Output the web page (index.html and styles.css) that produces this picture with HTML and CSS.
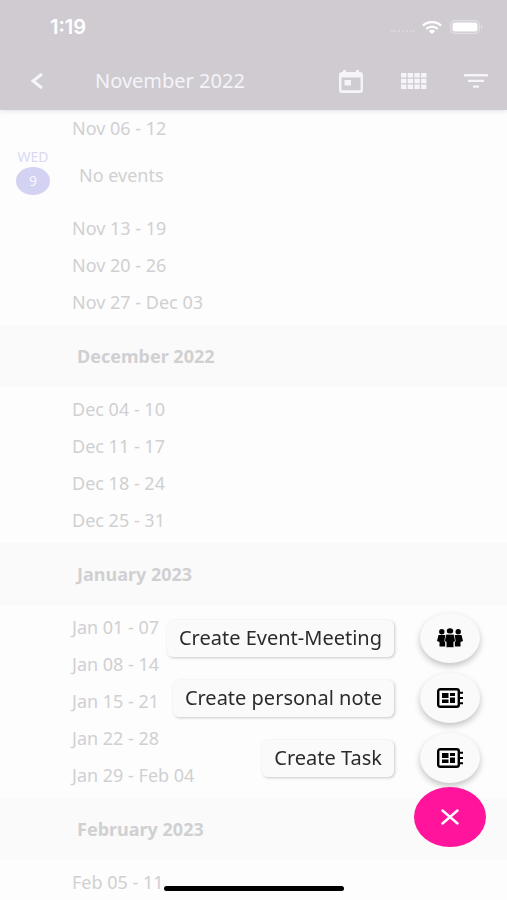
FILE: index.html
```
<!DOCTYPE html>
<html lang="en">
<head>
<meta charset="utf-8">
<meta name="viewport" content="width=device-width, initial-scale=1">
<title>Calendar</title>
<link rel="stylesheet" href="styles.css">
</head>
<body>
<header class="top">
  <div class="status">
    <span class="clock">1:19</span>
    <span class="signal"></span>
    <svg class="wifi" viewBox="0 0 20 13" preserveAspectRatio="none" fill="none" stroke="currentColor" stroke-width="2.4"><path d="M1 4.5C6-.1 14-.1 19 4.500M4.300 7.900c3.300-3 8.100-3 11.400 0"/><path d="M10 13 6.800 10c1.900-1.700 4.500-1.700 6.400 0z" fill="currentColor" stroke="none"/></svg>
    <svg class="battery" viewBox="0 0 33 14"><rect x=".7" y=".7" width="28.600" height="12.600" rx="4" fill="none" stroke="#e3e0e5" stroke-width="1.200"/><rect x="2.500" y="2.500" width="25" height="9" rx="2.500" fill="currentColor"/><path d="M31 5c2 .6 2 3.400 0 4z" fill="#e3e0e5"/></svg>
  </div>
  <nav class="bar">
    <button class="tool" aria-label="Back"><svg width="14" height="18" viewBox="0 0 14 18" fill="none" stroke="currentColor" stroke-width="3"><path d="M12 2 3 9l9 7"/></svg></button>
    <h1 class="title">November 2022</h1>
    <button class="tool" aria-label="Today"><svg width="24" height="23" viewBox="0 0 24 23"><path fill="currentColor" fill-rule="evenodd" d="M4 0h3v2h10V0h3v2h1a3 3 0 0 1 3 3v15a3 3 0 0 1-3 3H3a3 3 0 0 1-3-3V5a3 3 0 0 1 3-3h1zM2.500 7.500v12.700h19V7.500zM5.500 10h6.500v5.500H5.500z"/></svg></button>
    <button class="tool" aria-label="Month grid"><svg width="26" height="16" viewBox="0 0 26 16" fill="currentColor"><path d="M0 0h5.400v4.500H0zM6.700 0h5.400v4.500H6.700zM13.400 0h5.400v4.500h-5.400zM20.100 0h5.400v4.500h-5.400zM0 5.700h5.400v4.500H0zM6.700 5.700h5.400v4.500H6.700zM13.400 5.700h5.400v4.500h-5.400zM20.100 5.700h5.400v4.500h-5.400zM0 11.400h5.400v4.500H0zM6.700 11.400h5.400v4.500H6.700zM13.400 11.400h5.400v4.500h-5.400zM20.100 11.400h5.400v4.500h-5.400z"/></svg></button>
    <button class="tool" aria-label="Filter"><svg width="24" height="14" viewBox="0 0 24 14" fill="currentColor"><path d="M0 0h24v2.400H0zM4 5.700h16v2.400H4zM9 11.400h6v2.400H9z"/></svg></button>
  </nav>
</header>
<main class="agenda">
  <section class="weeks first">
    <p class="week">Nov 06 - 12</p>
    <div class="day">
      <div class="date"><span>WED</span><span class="number">9</span></div>
      <p class="event">No events</p>
    </div>
    <p class="week">Nov 13 - 19</p>
    <p class="week">Nov 20 - 26</p>
    <p class="week">Nov 27 - Dec 03</p>
  </section>
  <h2 class="month">December 2022</h2>
  <section class="weeks">
    <p class="week">Dec 04 - 10</p>
    <p class="week">Dec 11 - 17</p>
    <p class="week">Dec 18 - 24</p>
    <p class="week">Dec 25 - 31</p>
  </section>
  <h2 class="month">January 2023</h2>
  <section class="weeks">
    <p class="week">Jan 01 - 07</p>
    <p class="week">Jan 08 - 14</p>
    <p class="week">Jan 15 - 21</p>
    <p class="week">Jan 22 - 28</p>
    <p class="week">Jan 29 - Feb 04</p>
  </section>
  <h2 class="month">February 2023</h2>
  <section class="weeks">
    <p class="week">Feb 05 - 11</p>
  </section>
</main>
<div class="actions">
  <button class="action"><span class="label">Create Event-Meeting</span><span class="bubble">
    <svg width="26" height="20" viewBox="0 0 26 20"><circle cx="4.800" cy="3.700" r="2.700"/><circle cx="21.200" cy="3.700" r="2.700"/><path d="M1.500 7h6.700v11.500H2.500V14L0 13zM17.800 7h6.700L26 13l-2.500 1v4.500h-5.700z"/><ellipse cx="13" cy="2.900" rx="3.200" ry="2.700"/><path d="M9 6.300h8l1.500 7-1.700.7v5.500H9.200V14l-1.700-.7z" stroke="#fafafa" stroke-width=".6"/></svg>
  </span></button>
  <button class="action"><span class="label">Create personal note</span><span class="bubble">
    <svg width="26" height="20" viewBox="0 0 26 20"><rect x="1.200" y="1.200" width="20.600" height="17.600" rx="2" fill="none" stroke="#000" stroke-width="2.400"/><path d="M5 5h6.500v5H5zM13 5h5v3h-5zM5 11.500h6.500V15H5zM13 9.500h5V15h-5zM23 3.800h3v2h-3zM23 9h3v2h-3zM23 14.200h3v2h-3z"/></svg>
  </span></button>
  <button class="action"><span class="label">Create Task</span><span class="bubble">
    <svg width="26" height="20" viewBox="0 0 26 20"><rect x="1.200" y="1.200" width="20.600" height="17.600" rx="2" fill="none" stroke="#000" stroke-width="2.400"/><path d="M5 5h6.500v5H5zM13 5h5v3h-5zM5 11.500h6.500V15H5zM13 9.500h5V15h-5zM23 3.800h3v2h-3zM23 9h3v2h-3zM23 14.200h3v2h-3z"/></svg>
  </span></button>
  <button class="close" aria-label="Close menu"><svg width="18" height="16" viewBox="0 0 18 16" stroke="#fff" stroke-width="2.400" stroke-linecap="round"><path d="m1.500 1.500 15 13m0-13-15 13"/></svg></button>
</div>
<div class="home"></div>
</body>
</html>
```
FILE: styles.css
```
* {
  box-sizing: border-box;
}

body {
  margin: 0;
  height: 100vh;
  overflow: hidden;
  background: #fdfdfd;
  color: #d0d0d2;
  font: 18px/24px "Noto Sans", sans-serif;
}

h1, h2, p {
  margin: 0;
}

button {
  border: 0;
  padding: 0;
  background: none;
  color: inherit;
  font: inherit;
}

svg {
  display: block;
}

.top {
  position: relative;
  background: #cfcbd1;
  color: #f5f4f8;
  box-shadow: 0 1px 5px #e2e0e6;
}

.status {
  display: flex;
  align-items: center;
  height: 54px;
  padding: 0 24px 0 50px;
  color: #fff;
}

.clock {
  margin-right: auto;
  font: 600 20px/26px Inter, sans-serif;
}

.signal {
  width: 24px;
  margin: 8px 7px 0 0;
  border-top: 2px dotted #dad7dc;
}

.wifi {
  width: 20px;
  height: 13px;
  margin-right: 8px;
}

.battery {
  width: 33px;
  height: 14px;
}

.bar {
  display: flex;
  align-items: center;
  height: 56px;
  padding: 0 15px 2px 17px;
}

.tool {
  display: grid;
  place-items: center;
  width: 40px;
  height: 40px;
}

.tool + .tool {
  margin-left: 23px;
}

.tool:last-child {
  width: 32px;
  margin-left: 26px;
}

.title {
  flex: 1;
  padding-left: 38px;
  font-size: 20px;
  font-weight: 400;
}

.weeks {
  padding: 4px 0 4px 72px;
}

.first {
  padding-top: 0;
}

.week {
  height: 37px;
  line-height: 37px;
}

.month {
  height: 62px;
  padding-left: 77px;
  background: #fafafa;
  font-size: 18px;
  line-height: 63px;
}

.day {
  display: flex;
  height: 63px;
  margin-left: -72px;
}

.date {
  display: flex;
  flex-direction: column;
  align-items: center;
  width: 66px;
  color: #dad9f3;
  font-size: 14px;
  line-height: 20px;
}

.number {
  width: 34px;
  height: 28px;
  border-radius: 50%;
  background: #d3d2f2;
  color: #f8f8ff;
  line-height: 28px;
  text-align: center;
}

.event {
  padding: 16px 0 0 7px;
  margin-left: 6px;
}

.actions {
  position: fixed;
  right: 21px;
  bottom: 53px;
  display: flex;
  flex-direction: column;
  align-items: flex-end;
  gap: 10px;
}

.action {
  display: flex;
  align-items: center;
  gap: 26px;
  margin-right: 6px;
}

.label {
  padding: 6px 12px 7px;
  border-radius: 6px;
  background: #fafafa;
  box-shadow: 1px 1px 3px #c8c8c8;
  color: #2b2b2b;
  font-size: 20px;
}

.bubble {
  display: grid;
  place-items: center;
  width: 60px;
  height: 50px;
  border-radius: 50%;
  background: #fafafa;
  box-shadow: 0 3px 6px #c2c2c2;
}

.close {
  display: grid;
  place-items: center;
  width: 72px;
  height: 60px;
  margin-top: -6px;
  border-radius: 50%;
  background: #ff149b;
}

.home {
  position: fixed;
  bottom: 9px;
  left: 50%;
  width: 180px;
  height: 5px;
  margin-left: -90px;
  border-radius: 3px;
  background: #000;
}
```
